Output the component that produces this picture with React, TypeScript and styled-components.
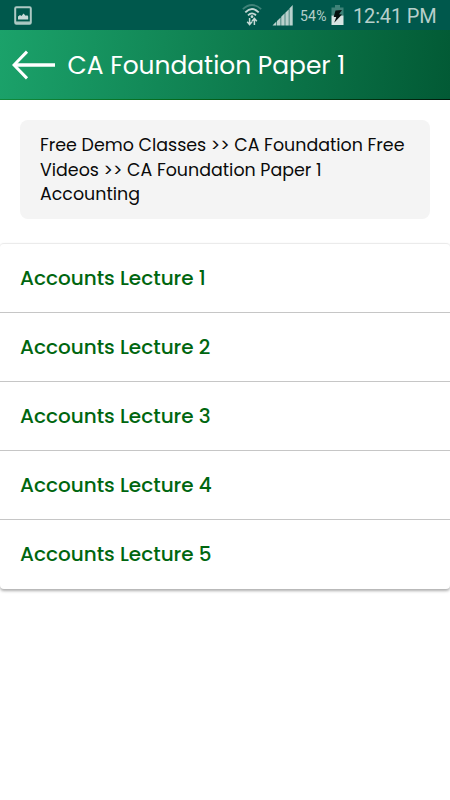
import React from "react";
import styled, { createGlobalStyle } from "styled-components";

const GlobalStyle = createGlobalStyle`
  * { box-sizing: border-box; }
  body { margin: 0; background: #fff; }
`;

const Screen = styled.div`
  width: 100%;
  min-height: 800px;
  background: #fff;
  font-family: Poppins, Inter, "Open Sans", sans-serif;
  overflow: hidden;
`;

const StatusBar = styled.div`
  height: 30px;
  padding: 0 13px 0 14px;
  display: flex;
  align-items: center;
  background: #00584c;
  color: #b6cfcb;
  font-family: Roboto, sans-serif;
`;

const StatusIcon = styled.svg<{ $gap?: number }>`
  display: block;
  flex: none;
  margin-right: ${(p) => p.$gap ?? 0}px;
`;

const Spacer = styled.div`
  flex: 1;
`;

const BatteryLevel = styled.span`
  width: 27px;
  margin-right: 4px;
  font-size: 14px;
  line-height: 30px;
  letter-spacing: 0.2px;
  white-space: nowrap;
  padding-top: 1px;
`;

const Clock = styled.span`
  width: 84px;
  font-size: 20px;
  line-height: 30px;
  letter-spacing: -0.15px;
  white-space: nowrap;
  padding-top: 1px;
`;

const Header = styled.header`
  height: 70px;
  padding-left: 12px;
  display: flex;
  align-items: center;
  background: linear-gradient(96deg, #1ba26a 0%, #025a35 100%);
  border-bottom: 1px solid;
  border-image: linear-gradient(90deg, #128a3c, #05691c 40%, #001a0c) 1;
`;

const BackButton = styled.button`
  width: 44px;
  height: 30px;
  padding: 0;
  border: 0;
  background: none;
  display: block;
`;

const Title = styled.h1`
  margin: 2px 0 0 11.5px;
  font-size: 24.9px;
  font-weight: 400;
  line-height: 36px;
  color: #fff;
  white-space: nowrap;
`;

const Breadcrumb = styled.nav`
  margin: 20px 20px 24px;
  height: 99px;
  padding: 12.6px 0 0 20px;
  border-radius: 8px;
  background: #f4f4f4;
  color: #0a0a0a;
`;

const CrumbLine = styled.div`
  font-size: 17.45px;
  line-height: 24.9px;
  white-space: nowrap;
`;

const LectureList = styled.ul`
  margin: 0;
  padding: 0;
  list-style: none;
  border-radius: 4px;
  border-top: 1px solid #ebebeb;
  box-shadow: 0 2px 3px rgba(0, 0, 0, 0.32);
`;

const Lecture = styled.li`
  height: 69px;
  padding: 0 0 0 20px;
  display: flex;
  align-items: center;
  color: #00660f;
  font-size: 20px;
  font-weight: 500;
  white-space: nowrap;

  &:not(:last-child) {
    border-bottom: 1px solid #c6c6c6;
  }

  &:last-child {
    padding-bottom: 1px;
  }
`;

const crumbs = [
  "Free Demo Classes >> CA Foundation Free",
  "Videos >> CA Foundation Paper 1",
  "Accounting",
];

const lectures = [1, 2, 3, 4, 5].map((n) => `Accounts Lecture ${n}`);

const PictureIcon = () => (
  <StatusIcon width="18" height="19" viewBox="0 0 18 19">
    <rect x="1.2" y="1.2" width="15.6" height="16.6" rx="1.2" fill="none" stroke="#adc9c4" strokeWidth="2" />
    <path d="M4 13.5V10.5l2-1.5 1.5 1L9.5 7.5 12 10l1-1 1.2 1.5v3Z" fill="#c8dad7" />
    <path d="M2 16.2h14" stroke="#adc9c4" strokeWidth="1.5" />
  </StatusIcon>
);

const WifiIcon = () => (
  <StatusIcon width="20" height="22" viewBox="0 0 20 22" $gap={10} fill="none">
    <path d="M.8 5.2Q10-3.2 19.2 5.2" stroke="#3f8278" strokeWidth="1.7" />
    <path d="M3.3 8.4Q10 1.8 16.7 8.4" stroke="#c5d9d6" strokeWidth="1.9" />
    <path d="M6 11.3Q10 7.4 14 11.3" stroke="#c5d9d6" strokeWidth="1.8" />
    <circle cx="10" cy="12.7" r="1.4" fill="#c5d9d6" />
    <path d="M7.6 14v6M5.2 17.7l2.4 2.9 2.4-2.9M12.4 21v-6M10 17.3l2.4-2.9 2.4 2.9" stroke="#c5d9d6" strokeWidth="1.5" />
  </StatusIcon>
);

const SignalIcon = () => (
  <StatusIcon width="21" height="21" viewBox="0 0 21 21" $gap={7} fill="#b9d1cd">
    <path d="M.5 20.5 4.4 16.6v3.9ZM5 20.5v-4.5L8.6 12.4v8.1ZM9.2 20.5v-8.7l3.5-3.5v12.2ZM13.3 20.5V7.7l3.5-3.5v16.3ZM17.4 20.5V3.6L20.7 0v20.5Z" />
  </StatusIcon>
);

const BatteryIcon = () => (
  <StatusIcon width="13" height="20" viewBox="0 0 13 20" $gap={9}>
    <path d="M4 0h5v2.5h3.5v8h-12v-8H4Z" fill="#3f8278" />
    <path d="M.5 10.5h12V20H.5Z" fill="#d8e5e3" />
    <path d="M4.5 5.5 11 5 8 9.3l3 .2L3.2 17.7 5.3 12 2.7 12Z" fill="#07110f" />
  </StatusIcon>
);

export default function App() {
  return (
    <>
      <GlobalStyle />
      <Screen>
        <StatusBar>
          <PictureIcon />
          <Spacer />
          <WifiIcon />
          <SignalIcon />
          <BatteryLevel>54%</BatteryLevel>
          <BatteryIcon />
          <Clock>12:41 PM</Clock>
        </StatusBar>
        <Header>
          <BackButton aria-label="Back">
            <svg width="44" height="30" viewBox="0 0 44 30" fill="none" stroke="#fff">
              <path d="M2 15H43" strokeWidth="3.6" />
              <path d="M15 1.6 2 15 15 28.4" strokeWidth="3" />
            </svg>
          </BackButton>
          <Title>CA Foundation Paper 1</Title>
        </Header>
        <Breadcrumb>
          {crumbs.map((line) => (
            <CrumbLine key={line}>{line}</CrumbLine>
          ))}
        </Breadcrumb>
        <LectureList>
          {lectures.map((name) => (
            <Lecture key={name}>{name}</Lecture>
          ))}
        </LectureList>
      </Screen>
    </>
  );
}
